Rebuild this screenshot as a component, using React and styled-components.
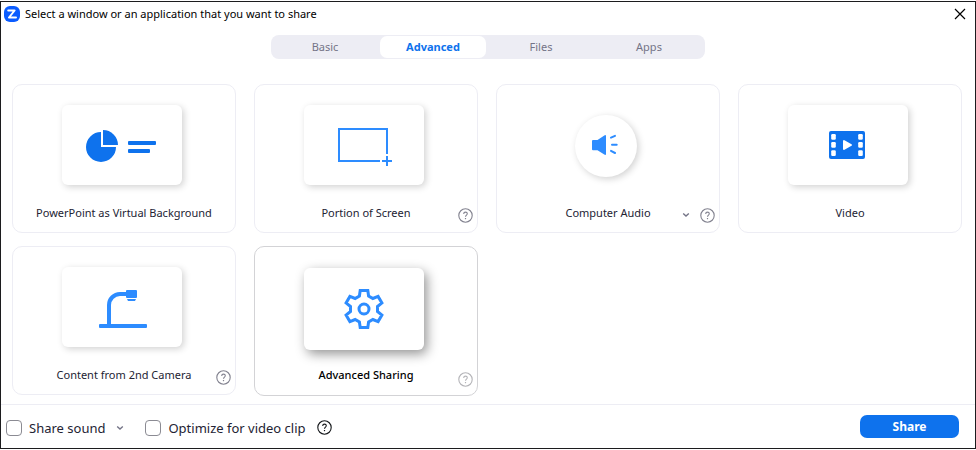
import React, { useState } from "react";
import styled, { createGlobalStyle, css } from "styled-components";

const GlobalStyle = createGlobalStyle`
  *, *::before, *::after { box-sizing: border-box; }
  body {
    margin: 0;
    background: #fff;
    font-family: "Noto Sans", "Open Sans", sans-serif;
    font-size: 11px;
    line-height: 16px;
    color: #232333;
  }
  button, input { font: inherit; color: inherit; }
`;

const Window = styled.main`
  display: flex;
  flex-direction: column;
  min-height: calc(100vh - 2px);
  margin: 1px 0;
  border: 1px solid #1c1c1e;
  background: #fff;
`;

const TitleBar = styled.header`
  display: flex;
  align-items: center;
  gap: 5px;
  height: 24px;
  padding: 0 9px 0 3px;
`;

const Title = styled.h1`
  flex: 1;
  margin: 0;
  font-size: 11px;
  font-weight: 400;
  color: #000;
`;

const IconButton = styled.button`
  display: flex;
  padding: 0;
  border: 0;
  background: none;
  color: ${(p) => p.$color || "#747487"};
  cursor: pointer;
`;

const Tabs = styled.div`
  display: grid;
  grid-template-columns: repeat(4, 1fr);
  align-self: center;
  width: 434px;
  max-width: 100%;
  height: 24px;
  margin-top: 9px;
  padding: 1px;
  border-radius: 8px;
  background: #ededf4;
`;

const Tab = styled.button`
  margin-right: 2px;
  padding: 0;
  border: 0;
  border-radius: 7px;
  background: none;
  color: #747487;
  cursor: pointer;
  ${(p) =>
    p.$active &&
    css`
      background: #fff;
      color: #0e72ed;
      font-weight: 700;
    `}
`;

const Grid = styled.section`
  flex: 1;
  display: grid;
  grid-template-columns: repeat(4, 1fr);
  align-content: start;
  gap: 13px 18px;
  padding: 25px 13px 8px 11px;
`;

const Card = styled.article`
  display: flex;
  flex-direction: column;
  height: ${(p) => (p.$selected ? 150 : 149)}px;
  border: 1px solid ${(p) => (p.$selected ? "#d3d3d6" : "#ededf4")};
  border-radius: 10px;
`;

const Preview = styled.button`
  flex: none;
  display: flex;
  align-items: center;
  justify-content: center;
  height: 119px;
  padding: ${(p) => (p.$selected ? "4px" : p.$round ? "2px" : 0)} 4px 0 0;
  border: 0;
  background: none;
  cursor: pointer;
`;

const Tile = styled.span`
  display: flex;
  align-items: center;
  justify-content: center;
  width: ${(p) => (p.$round ? 62 : 120)}px;
  height: ${(p) => (p.$round ? 62 : p.$selected ? 82 : 80)}px;
  border-radius: ${(p) => (p.$round ? "50%" : "6px")};
  background: #fff;
  box-shadow: ${(p) =>
    p.$selected ? "3px 4px 12px rgba(0, 0, 0, 0.42)" : "2px 2px 7px rgba(0, 0, 0, 0.18)"};
`;

const CardFooter = styled.div`
  display: grid;
  grid-template-columns: 1fr auto 1fr;
  height: 28px;
  padding: 0 4px;
`;

const CardLabel = styled.span`
  grid-column: 2;
  padding-top: 1px;
  white-space: nowrap;
  color: ${(p) => (p.$selected ? "#000" : "#232333")};
  font-weight: ${(p) => (p.$selected ? 500 : 400)};
`;

const CardActions = styled.div`
  display: flex;
  align-items: center;
  justify-content: flex-end;
  gap: 10px;
  height: ${(p) => (p.$selected ? 26 : 22)}px;
`;

const Footer = styled.footer`
  display: flex;
  align-items: center;
  height: 44px;
  padding: 2px 16px 0 5px;
  border-top: 1px solid #ededf4;
  font-size: 13px;
`;

const Option = styled.label`
  display: flex;
  align-items: center;
  gap: 7px;
  white-space: nowrap;
`;

const Checkbox = styled.input`
  appearance: none;
  width: 16px;
  height: 16px;
  margin: 0;
  border: 1px solid #8b8b93;
  border-radius: 4px;
  background: #fff;
  &:checked { background: #0e72ed; border-color: #0e72ed; }
`;

const OptionGroup = styled.div`
  display: flex;
  align-items: center;
  gap: 11px;
  margin-right: 21px;
`;

const ShareButton = styled.button`
  width: 99px;
  height: 23px;
  margin: 0 0 2px auto;
  padding: 0;
  border: 0;
  border-radius: 7px;
  background: #0e72ed;
  color: #fff;
  font-size: 12px;
  font-weight: 700;
  cursor: pointer;
`;

const Logo = () => (
  <svg width="16" height="16" viewBox="0 0 16 16" aria-hidden="true">
    <rect width="16" height="16" rx="6" fill="#0b5cff" />
    <path d="M4.2 4.5H10.6L5 11.5H12" fill="none" stroke="#fff" strokeWidth="2" strokeLinejoin="round" strokeLinecap="round" />
  </svg>
);

const CloseIcon = () => (
  <svg width="12" height="12" viewBox="0 0 12 12" aria-hidden="true">
    <path d="M1 1L11 11M11 1L1 11" stroke="currentColor" strokeWidth="1.2" />
  </svg>
);

const HelpIcon = () => (
  <svg width="15" height="15" viewBox="0 0 15 15" fill="none" stroke="currentColor" aria-hidden="true">
    <circle cx="7.5" cy="7.5" r="6.7" strokeWidth="1.1" />
    <path d="M5.7 6C5.7 4.8 6.4 4.1 7.5 4.1S9.3 4.8 9.3 5.8C9.3 7.1 7.5 7.2 7.5 8.8" strokeWidth="1.1" />
    <path d="M7.5 10V11.2" strokeWidth="1.2" />
  </svg>
);

const ChevronIcon = () => (
  <svg width="8" height="6" viewBox="0 0 8 6" fill="none" stroke="currentColor" aria-hidden="true">
    <path d="M1.2 1.5L4 4.1L6.8 1.5" strokeWidth="1.4" />
  </svg>
);

const SlidesArt = () => (
  <svg width="120" height="80" viewBox="0 0 120 80" fill="#0e72ed" aria-hidden="true">
    <path d="M39 42V27A15 15 0 1 0 54 42Z" />
    <path d="M41 40V25A15 15 0 0 1 56 40Z" />
    <rect x="66" y="36" width="28" height="4" rx="1" />
    <rect x="66" y="44" width="22" height="4" rx="1" />
  </svg>
);

const PortionArt = () => (
  <svg width="120" height="80" viewBox="0 0 120 80" fill="none" stroke="#2d8cff" strokeWidth="2" aria-hidden="true">
    <path d="M76 56H35V24H83V49M83 51V61M78 56H88" />
  </svg>
);

const AudioArt = () => (
  <svg width="62" height="62" viewBox="0 0 62 62" fill="#2d8cff" aria-hidden="true">
    <path d="M18 25H22.5L29.3 20.4Q31 19.5 31 21V39Q31 40.4 29.3 39.6L22.5 35.3H18Q17 35.3 17 34.3V26Q17 25 18 25Z" />
    <path d="M36 22.6L40 20.8M37 29.7H41.7M36 35.9L40 38" stroke="#2d8cff" strokeWidth="2" strokeLinecap="round" />
  </svg>
);

const VideoArt = () => (
  <svg width="120" height="80" viewBox="0 0 120 80" aria-hidden="true">
    <rect x="41" y="26" width="36" height="28" rx="2" fill="#0e72ed" />
    {[43.2, 70.2].map((x) =>
      [29, 37, 45.2].map((y) => (
        <rect key={`${x}-${y}`} x={x} y={y} width="4.6" height="5.8" rx="1.2" fill="#fff" />
      ))
    )}
    <path d="M56 36V44L63 40Z" fill="#fff" stroke="#fff" strokeWidth="2" strokeLinejoin="round" />
  </svg>
);

const CameraArt = () => (
  <svg width="120" height="80" viewBox="0 0 120 80" fill="#2d8cff" aria-hidden="true">
    <rect x="37" y="57" width="48" height="4" rx="1" />
    <path d="M47 58V38A11 11 0 0 1 58 27H65" fill="none" stroke="#2d8cff" strokeWidth="4" />
    <rect x="64" y="23" width="11" height="8" rx="1" />
    <path d="M65 32H74L73 34H66Z" />
  </svg>
);

const GearArt = () => (
  <svg width="42" height="42" viewBox="-21 -21 42 42" fill="none" stroke="#2d8cff" strokeWidth="3" aria-hidden="true">
    <path d="M-3.8 -18.5H3.8L4.6 -13L8.9 -10.5L14.1 -12.6L17.9 -6L13.5 -2.5V2.5L17.9 6L14.1 12.6L8.9 10.5L4.6 13L3.8 18.5H-3.8L-4.6 13L-8.9 10.5L-14.1 12.6L-17.9 6L-13.5 2.5V-2.5L-17.9 -6L-14.1 -12.6L-8.9 -10.5L-4.6 -13Z" />
    <circle r="5" />
  </svg>
);

const sources = [
  { name: "PowerPoint as Virtual Background", Art: SlidesArt },
  { name: "Portion of Screen", Art: PortionArt, help: true },
  { name: "Computer Audio", Art: AudioArt, help: true, menu: true, round: true },
  { name: "Video", Art: VideoArt },
  { name: "Content from 2nd Camera", Art: CameraArt, help: true },
  { name: "Advanced Sharing", Art: GearArt, help: true },
];

function SourceCard({ source, selected, onSelect }) {
  const { name, Art, help, menu, round } = source;
  return (
    <Card $selected={selected}>
      <Preview
        type="button"
        aria-label={name}
        aria-pressed={selected}
        $selected={selected}
        $round={round}
        onClick={onSelect}
      >
        <Tile $round={round} $selected={selected}>
          <Art />
        </Tile>
      </Preview>
      <CardFooter>
        <CardLabel $selected={selected}>{name}</CardLabel>
        <CardActions $selected={selected}>
          {menu && (
            <IconButton type="button" aria-label={`${name} options`}>
              <ChevronIcon />
            </IconButton>
          )}
          {help && (
            <IconButton type="button" aria-label={`About ${name}`} $color={selected ? "#b4b4b8" : "#82828f"}>
              <HelpIcon />
            </IconButton>
          )}
        </CardActions>
      </CardFooter>
    </Card>
  );
}

export default function App() {
  const [tab, setTab] = useState("Advanced");
  const [selected, setSelected] = useState("Advanced Sharing");
  return (
    <>
      <GlobalStyle />
      <Window>
        <TitleBar>
          <Logo />
          <Title>Select a window or an application that you want to share</Title>
          <IconButton type="button" aria-label="Close" $color="#000">
            <CloseIcon />
          </IconButton>
        </TitleBar>
        <Tabs role="tablist">
          {["Basic", "Advanced", "Files", "Apps"].map((name) => (
            <Tab
              key={name}
              type="button"
              role="tab"
              aria-selected={tab === name}
              $active={tab === name}
              onClick={() => setTab(name)}
            >
              {name}
            </Tab>
          ))}
        </Tabs>
        <Grid>
          {sources.map((source) => (
            <SourceCard
              key={source.name}
              source={source}
              selected={selected === source.name}
              onSelect={() => setSelected(source.name)}
            />
          ))}
        </Grid>
        <Footer>
          <OptionGroup>
            <Option>
              <Checkbox type="checkbox" />
              Share sound
            </Option>
            <IconButton type="button" aria-label="Sound options">
              <ChevronIcon />
            </IconButton>
          </OptionGroup>
          <OptionGroup>
            <Option>
              <Checkbox type="checkbox" />
              Optimize for video clip
            </Option>
            <IconButton type="button" aria-label="About video clip optimization" $color="#131619">
              <HelpIcon />
            </IconButton>
          </OptionGroup>
          <ShareButton type="button">Share</ShareButton>
        </Footer>
      </Window>
    </>
  );
}
